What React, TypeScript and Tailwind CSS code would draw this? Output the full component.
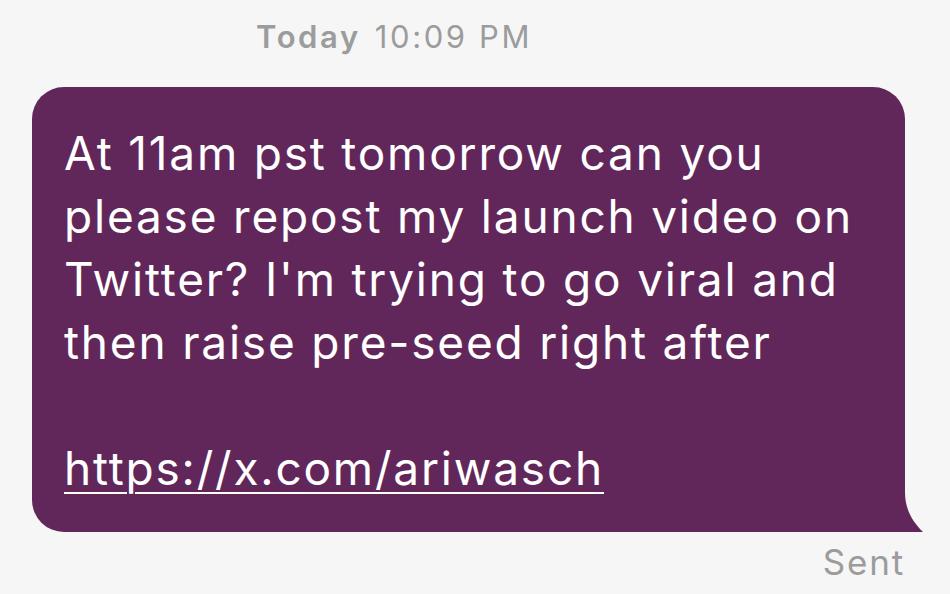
import React from "react";

export default function App() {
  return (
    <div className="w-[950px] h-[594px] bg-[#f6f6f6] overflow-hidden" style={{ fontFamily: "Inter, 'Noto Sans', sans-serif" }}>
      <div className="flex pt-[15px] pl-[256px] h-[60px] text-[31px] leading-[44px] text-[#9c9c9c]">
        <span className="font-semibold tracking-[2.6px]">Today</span>
        <span className="ml-[14px] tracking-[2.6px]">10:09 PM</span>
      </div>
      <div className="relative ml-[32px] mt-[27px] w-[873px] h-[445px]">
        <div className="w-full h-full bg-[#62275a] rounded-[32px] rounded-br-none pl-[32px] pt-[35px] text-white text-[46px] leading-[63px] tracking-[1.8px]">
          <div>At 11am pst tomorrow can you</div>
          <div>please repost my launch video on</div>
          <div>Twitter? I'm trying to go viral and</div>
          <div>then raise pre-seed right after</div>
          <div className="h-[63px]"></div>
          <div><span className="underline decoration-[2px] underline-offset-[7px]">https://x.com/ariwasch</span></div>
        </div>
        <svg className="absolute right-[-18px] bottom-0" width="20" height="40" viewBox="0 0 20 40">
          <path d="M0 0 L2 0 C2 16 8 28 20 40 L0 40 Z" fill="#62275a" />
        </svg>
      </div>
      <div className="flex justify-end pr-[45px] mt-[8px] text-[35px] leading-[44px] text-[#9c9c9c] tracking-[1.8px]">Sent</div>
    </div>
  );
}
